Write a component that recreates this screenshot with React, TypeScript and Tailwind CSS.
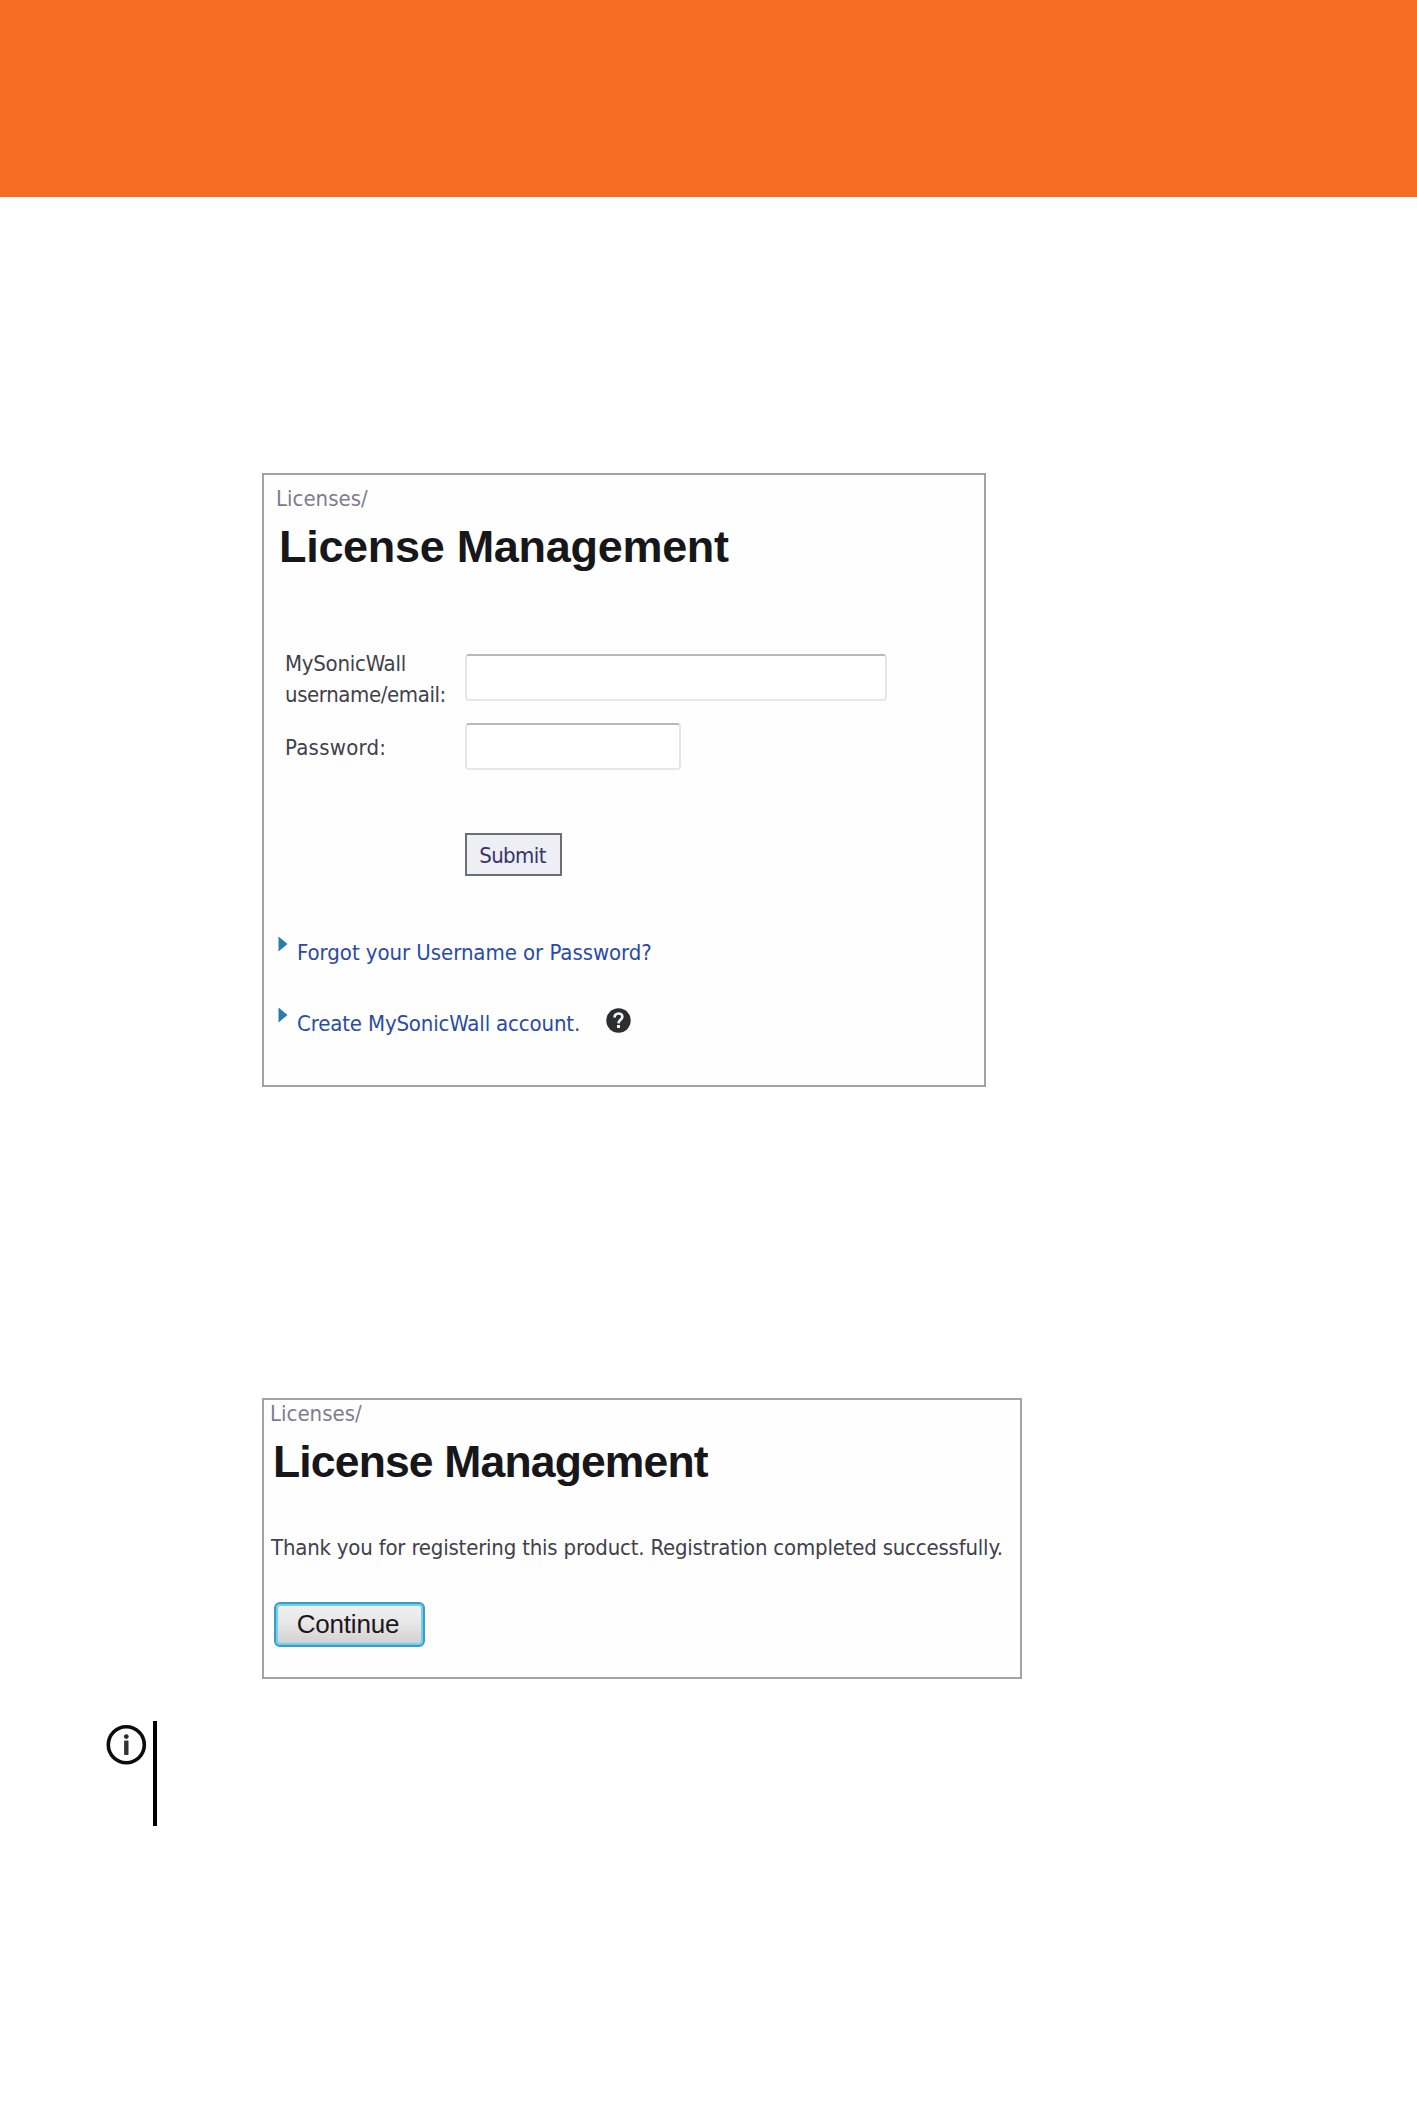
import React from "react";

function Arrow() {
  return (
    <svg className="h-[16px] w-[10px] shrink-0" viewBox="0 0 10 16">
      <path d="M0.5 0.5 L9.5 8 L0.5 15.5 Z" fill="#2a7cab" />
    </svg>
  );
}

function HelpIcon() {
  return (
    <svg className="mt-px ml-[37px] h-[25px] w-[25px] shrink-0" viewBox="0 0 25 25">
      <circle cx="12.5" cy="12.5" r="12.2" fill="#2b2d2f" />
      <path
        d="M8.6 9.4 C8.6 4.2 16.6 4.4 16.3 8.8 C16.1 11.8 12.6 11.8 12.5 15.4"
        fill="none"
        stroke="#f4f4f4"
        strokeWidth="2.7"
      />
      <rect x="11" y="17" width="3" height="3" fill="#f4f4f4" />
    </svg>
  );
}

function InfoIcon() {
  return (
    <svg className="mt-[3px] h-[42px] w-[42px] shrink-0" viewBox="0 0 42 42">
      <circle cx="21.3" cy="20.8" r="18" fill="none" stroke="#0c0c0c" strokeWidth="3.6" />
      <circle cx="21.3" cy="12.6" r="2.4" fill="#2a2a2a" />
      <rect x="19.1" y="16.6" width="4.4" height="14.4" rx="0.8" fill="#333" />
    </svg>
  );
}

const inputClass =
  "h-[47px] rounded-[4px] border-2 border-x-[#e3e5e7] border-b-[#e6e7ec] border-t-[#b9b9b9] bg-white outline-none";

export default function App() {
  return (
    <main className="flex h-[2126px] w-[1417px] flex-col overflow-hidden bg-white font-['DejaVu_Sans_Condensed','DejaVu_Sans',sans-serif] text-[22px] leading-[26px] text-[#41414b]">
      <header className="h-[197px] shrink-0 bg-[#f56d22]" />

      <section className="mt-[276px] ml-[262px] flex h-[614px] w-[724px] shrink-0 flex-col border-2 border-[#a3a3a3] bg-[#fefefe]">
        <p className="mt-[11px] ml-[12px] text-[#7c7c90]">Licenses/</p>
        <h1 className="mt-[11px] ml-[15px] font-['Liberation_Sans',sans-serif] text-[45px] leading-[48px] font-bold tracking-[-0.3px] whitespace-nowrap text-[#17171a]">
          License Management
        </h1>

        <form className="mt-[77px] ml-[20px] flex flex-col items-start">
          <div className="flex">
            <label className="w-[181px] pl-px leading-[31px] tracking-[-0.25px]">
              MySonicWall
              <br />
              <span className="tracking-[-0.4px]">username/email:</span>
            </label>
            <input className={`${inputClass} mt-[6px] w-[422px]`} />
          </div>
          <div className="mt-[13px] flex">
            <label className="mt-[9px] w-[181px] pl-px leading-[31px] tracking-[0.25px]">Password:</label>
            <input type="password" className={`${inputClass} w-[216px]`} />
          </div>
          <button
            type="button"
            className="mt-[63px] ml-[181px] h-[43px] w-[97px] border-2 border-[#6c6e75] bg-[#eeeef4] pt-[2px] pr-[2px] tracking-[-0.6px] text-[#36366a]"
          >
            Submit
          </button>
        </form>

        <div className="mt-[60px] ml-[14px] flex flex-col gap-[41px] text-[#2a4ba6]">
          <div className="flex h-[30px]">
            <Arrow />
            <a className="mt-[4px] ml-[9px] tracking-[-0.05px] whitespace-nowrap">Forgot your Username or Password?</a>
          </div>
          <div className="flex h-[30px]">
            <Arrow />
            <a className="mt-[4px] ml-[9px] w-[272px] tracking-[-0.15px] whitespace-nowrap">
              Create MySonicWall account.
            </a>
            <HelpIcon />
          </div>
        </div>
      </section>

      <section className="mt-[311px] ml-[262px] flex h-[281px] w-[760px] shrink-0 flex-col items-start border-2 border-[#a3a3a3] bg-[#fefefe]">
        <p className="mt-[1px] ml-[6px] text-[#7c7c90]">Licenses/</p>
        <h1 className="mt-[11px] ml-[9px] font-['Liberation_Sans',sans-serif] text-[44.5px] leading-[48px] font-bold tracking-[-0.85px] whitespace-nowrap text-[#17171a]">
          License Management
        </h1>
        <p className="mt-[49px] ml-[7px] tracking-[-0.2px] whitespace-nowrap">
          Thank you for registering this product. Registration completed successfully.
        </p>
        <button
          type="button"
          className="mt-[41px] ml-[10px] h-[45px] w-[151px] rounded-[6px] border-2 border-[#3b9cc4] bg-linear-to-b from-[#f1f1f1] from-0% via-[#e6e6e6] via-50% to-[#cfcfcf] to-100% pr-[3px] pb-[2px] font-['Liberation_Sans',sans-serif] text-[26px] leading-[30px] tracking-[-0.2px] text-[#1f1720] shadow-[inset_0_0_0_2px_#6dd0ee]"
        >
          Continue
        </button>
      </section>

      <aside className="mt-[42px] ml-[105px] flex h-[105px] shrink-0">
        <InfoIcon />
        <div className="ml-[6px] w-[4px] bg-black" />
      </aside>
    </main>
  );
}
